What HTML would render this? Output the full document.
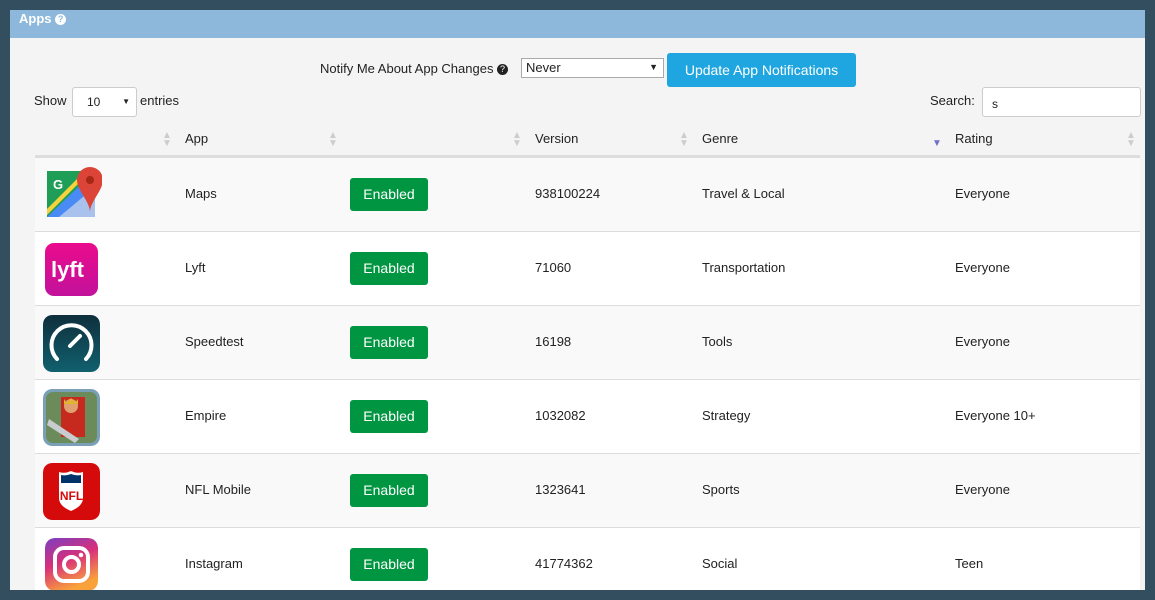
<!DOCTYPE html>
<html><head><meta charset="utf-8"><style>
*{box-sizing:border-box;margin:0;padding:0}
body{width:1155px;height:600px;background:#324e5f;font-family:"Liberation Sans",sans-serif;font-size:13px;color:#222;position:relative;overflow:hidden}
.panel{position:absolute;left:10px;top:10px;width:1135px;height:580px;background:#f4f4f4;overflow:hidden}
.hdr{position:absolute;left:0;top:0;width:1135px;height:28px;background:#8db8db;color:#fff;font-weight:bold;font-size:13px;padding:1px 0 0 9px}
.q{display:inline-block;width:11px;height:11px;border-radius:50%;background:#fff;color:#8db8db;font-size:9px;text-align:center;line-height:11px;vertical-align:1px}
.q2{background:#222;color:#fff}
.abs{position:absolute}
.sel{background:#fff;border:1px solid #aaa;height:20px;font-size:13px;padding:1px 4px}
.btn{background:#1fa6e0;color:#fff;border-radius:3px;font-size:14px;text-align:center}
.row{position:absolute;left:25px;width:1105px;height:74px;border-bottom:1px solid #ddd}
.row div{position:absolute;top:28px}
.en{background:#009641;color:#fff;border-radius:3px;width:78px;height:33px;text-align:center;line-height:33px;font-size:14px;top:20px!important;left:315px}
.sort{position:absolute;color:#ccc;font-size:10px;line-height:8px}
.th{position:absolute;top:121px}
.icon{position:absolute;left:8px;top:9px!important;width:57px;height:57px;border-radius:9px}
</style></head><body>
<div class="panel">
<div class="hdr">Apps <span class="q">?</span></div>
<div class="abs" style="left:310px;top:51px">Notify Me About App Changes <span class="q q2">?</span></div>
<div class="abs sel" style="left:511px;top:48px;width:143px">Never<span style="position:absolute;right:5px;font-size:9px;top:3px">▼</span></div>
<div class="abs btn" style="left:657px;top:43px;width:189px;height:34px;line-height:34px">Update App Notifications</div>
<div class="abs" style="left:24px;top:83px">Show</div>
<div class="abs" style="left:62px;top:77px;width:65px;height:30px;background:#fff;border:1px solid #ccc;border-radius:3px;padding:7px 0 0 14px;font-size:12px">10<span style="position:absolute;right:6px;font-size:8px;top:9px">▼</span></div>
<div class="abs" style="left:130px;top:83px">entries</div>
<div class="abs" style="left:920px;top:83px">Search:</div>
<div class="abs" style="left:972px;top:77px;width:159px;height:30px;background:#fff;border:1px solid #ccc;border-radius:3px;padding:9px 0 0 9px;font-size:12px">s</div>
<div class="th" style="left:175px">App</div>
<div class="th" style="left:525px">Version</div>
<div class="th" style="left:692px">Genre</div>
<div class="th" style="left:945px">Rating</div>
<div class="sort" style="left:152px;top:122px">▲<br>▼</div>
<div class="sort" style="left:318px;top:122px">▲<br>▼</div>
<div class="sort" style="left:502px;top:122px">▲<br>▼</div>
<div class="sort" style="left:669px;top:122px">▲<br>▼</div>
<div class="sort" style="left:1116px;top:122px">▲<br>▼</div>
<div class="sort" style="left:922px;top:130px;color:#7070c8;font-size:10px">▼</div>
<div class="abs" style="left:25px;top:145px;width:1105px;height:3px;background:#ddd"></div>

<div class="row" style="top:148px;background:#f9f9f9">
<svg class="icon" style="top:9px;left:10px" width="57" height="57" viewBox="0 0 57 57"><rect x="2" y="4" width="48" height="46" fill="#1e9e56"/><polygon points="2,50 50,4 50,50" fill="#4a8af4"/><polygon points="2,42 40,4 46,4 2,48" fill="#f8d23c"/><polygon points="14,50 50,20 50,50" fill="#e8e8e8" opacity=".6"/><text x="8" y="22" fill="#fff" font-size="13" font-weight="bold" font-family="Liberation Sans">G</text><path d="M45 0a13 13 0 0 1 13 13c0 10-13 22-13 32 0-10-13-22-13-32A13 13 0 0 1 45 0z" fill="#db4437"/><circle cx="45" cy="13" r="4" fill="#a52714"/></svg>
<div style="left:150px">Maps</div><div class="en">Enabled</div><div style="left:500px">938100224</div><div style="left:667px">Travel &amp; Local</div><div style="left:920px">Everyone</div></div>

<div class="row" style="top:222px;background:#fff">
<svg class="icon" style="left:10px;width:53px;height:53px;top:11px!important" viewBox="0 0 53 53"><defs><linearGradient id="ly" x1="0" y1="0" x2="0" y2="1"><stop offset="0" stop-color="#ea0b8c"/><stop offset="1" stop-color="#c2129b"/></linearGradient></defs><rect width="53" height="53" rx="3" fill="url(#ly)"/><text x="6" y="34" fill="#fff" font-size="22" font-weight="bold" font-family="Liberation Sans">lyft</text></svg>
<div style="left:150px">Lyft</div><div class="en">Enabled</div><div style="left:500px">71060</div><div style="left:667px">Transportation</div><div style="left:920px">Everyone</div></div>

<div class="row" style="top:296px;background:#f9f9f9">
<svg class="icon" viewBox="0 0 57 57"><defs><linearGradient id="sp" x1="0" y1="0" x2="0" y2="1"><stop offset="0" stop-color="#0f2f3c"/><stop offset="1" stop-color="#11606e"/></linearGradient></defs><rect width="57" height="57" rx="9" fill="url(#sp)"/><path d="M14 44A20 20 0 1 1 43 44" fill="none" stroke="#fff" stroke-width="4" stroke-linecap="round"/><path d="M27 31L37 21" stroke="#fff" stroke-width="4" stroke-linecap="round"/></svg>
<div style="left:150px">Speedtest</div><div class="en">Enabled</div><div style="left:500px">16198</div><div style="left:667px">Tools</div><div style="left:920px">Everyone</div></div>

<div class="row" style="top:370px;background:#fff">
<svg class="icon" viewBox="0 0 57 57"><rect width="57" height="57" rx="9" fill="#7aa0b8"/><rect x="3" y="3" width="51" height="51" rx="7" fill="#6b8c5a"/><path d="M18 8h24v40H18z" fill="#c62a1f"/><circle cx="28" cy="17" r="7" fill="#e0a070"/><path d="M21 10l3 4 4-5 4 5 3-4v5H21z" fill="#e3b52c"/><path d="M6 30l30 20-4 4L4 36z" fill="#c8ccd0"/></svg>
<div style="left:150px">Empire</div><div class="en">Enabled</div><div style="left:500px">1032082</div><div style="left:667px">Strategy</div><div style="left:920px">Everyone 10+</div></div>

<div class="row" style="top:444px;background:#f9f9f9">
<svg class="icon" viewBox="0 0 57 57"><rect width="57" height="57" rx="9" fill="#d50a0a"/><path d="M16 9q6 2 12-1 6 3 12 1v26q0 8-12 13-12-5-12-13z" fill="#fff"/><path d="M18 12q5 1 10-1 5 2 10 1v8H18z" fill="#013369"/><text x="28.5" y="37" fill="#d50a0a" font-size="12" font-weight="bold" text-anchor="middle" font-family="Liberation Sans">NFL</text></svg>
<div style="left:150px">NFL Mobile</div><div class="en">Enabled</div><div style="left:500px">1323641</div><div style="left:667px">Sports</div><div style="left:920px">Everyone</div></div>

<div class="row" style="top:518px;background:#fff">
<svg class="icon" style="left:10px;width:53px;height:53px;top:10px!important" viewBox="0 0 53 53"><defs><linearGradient id="ig" x1="0" y1="0" x2=".4" y2="1"><stop offset="0" stop-color="#7a3fc2"/><stop offset=".5" stop-color="#d8307a"/><stop offset="1" stop-color="#f9a23a"/></linearGradient></defs><rect width="53" height="53" rx="10" fill="url(#ig)"/><rect x="10" y="10" width="33" height="33" rx="9" fill="none" stroke="#fff" stroke-width="4"/><circle cx="26.5" cy="26.5" r="7.5" fill="none" stroke="#fff" stroke-width="4"/><circle cx="36" cy="17" r="2.3" fill="#fff"/></svg>
<div style="left:150px">Instagram</div><div class="en">Enabled</div><div style="left:500px">41774362</div><div style="left:667px">Social</div><div style="left:920px">Teen</div></div>
</div>
</body></html>
